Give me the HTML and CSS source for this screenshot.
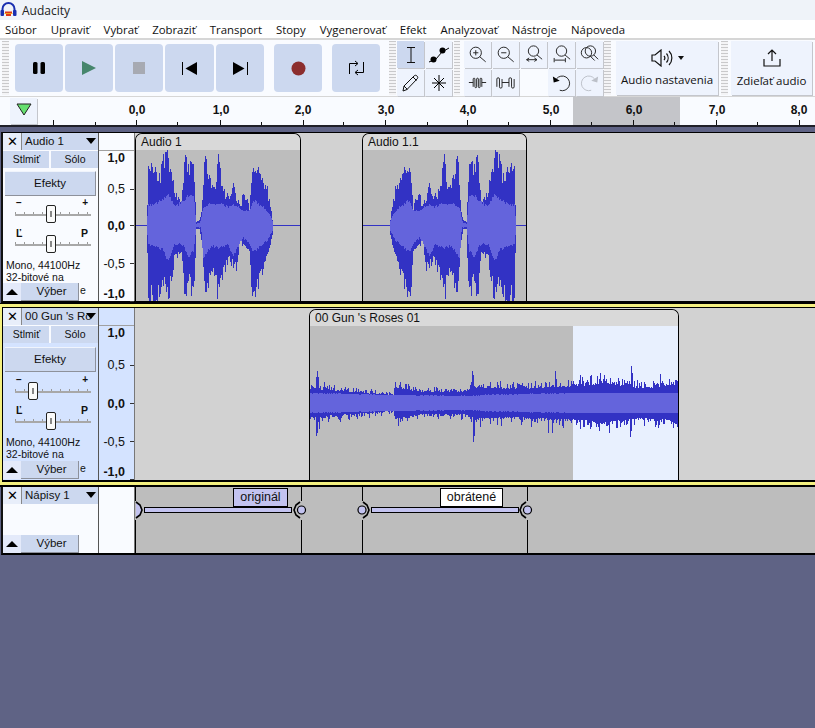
FILE: index.html
```html
<!DOCTYPE html>
<html lang="sk">
<head>
<meta charset="utf-8">
<title>Audacity</title>
<link rel="stylesheet" href="styles.css">
</head>
<body>
<header class="titlebar">
  <svg class="app-icon" width="17" height="16" viewBox="0 0 17 16"><path d="M2.500 10V7a6 6 0 0 1 12 0v3" fill="none" stroke="#1a2fb0" stroke-width="2"/><rect x="0.500" y="8" width="3.500" height="6" rx="1" fill="#1a2fb0"/><rect x="13" y="8" width="3.500" height="6" rx="1" fill="#1a2fb0"/><path d="M4.500 11h8v1h-8z" fill="#f0a020"/><path d="M5 9.500h7V11H5zM6 12h5v2H6z" fill="#e03818"/></svg>
  <span>Audacity</span>
</header>
<nav class="menubar">
  <span>Súbor</span><span>Upraviť</span><span>Vybrať</span><span>Zobraziť</span><span>Transport</span><span>Stopy</span><span>Vygenerovať</span><span>Efekt</span><span>Analyzovať</span><span>Nástroje</span><span>Nápoveda</span>
</nav>
<section class="toolbar">
  <div class="grip"></div>
  <div class="transport">
    <button class="tbtn"><svg width="14" height="14" viewBox="0 0 14 14"><rect x="1" y="1" width="4.500" height="12" rx="1.500"/><rect x="8.500" y="1" width="4.500" height="12" rx="1.500"/></svg></button>
    <button class="tbtn"><svg width="16" height="16" viewBox="0 0 16 16"><path d="M1 1l14 7-14 7z" fill="#46866c"/></svg></button>
    <button class="tbtn"><svg width="12" height="12" viewBox="0 0 12 12"><rect width="12" height="12" fill="#a7aab2"/></svg></button>
    <button class="tbtn wide"><svg width="15" height="13" viewBox="0 0 15 13"><path d="M.5 0v13" stroke="#000" fill="none"/><path d="M15 0v13L3.500 6.500z"/></svg></button>
    <button class="tbtn"><svg width="15" height="13" viewBox="0 0 15 13"><path d="M14.500 0v13" stroke="#000" fill="none"/><path d="M0 0v13l11.500-6.500z"/></svg></button>
    <button class="tbtn gap-left"><svg width="15" height="15" viewBox="0 0 15 15"><circle cx="7.500" cy="7.500" r="7" fill="#8c2e2e"/></svg></button>
    <button class="tbtn gap-left"><svg width="15" height="16" viewBox="0 0 15 16" fill="none" stroke="#000"><path d="M.5 14V3.500H8.500M6 1l3 2.500L6 6M14.500 2v10.500H6.500M9 10l-3 2.500L9 15"/></svg></button>
  </div>
  <div class="grip grip-b"></div>
  <div class="tools">
    <button class="sbtn active"><svg width="12" height="16" viewBox="0 0 12 16" fill="none" stroke="#111"><path d="M2 .5h8M2 15.500h8M6 .5v15"/></svg></button>
    <button class="sbtn"><svg width="22" height="18" viewBox="0 0 22 18"><path d="M1 16L8 13 14 6 21 2" stroke="#000" fill="none"/><circle cx="5.500" cy="13.500" r="3"/><circle cx="14.500" cy="4.500" r="3"/></svg></button>
    <button class="sbtn"><svg width="17" height="18" viewBox="0 0 17 18" fill="none" stroke="#111"><path d="M1 17l1-5L12 2c1-1 2-1 3 0s1 2 0 3L5 15.500zM2 12l3.500 3.500M11 3l3.500 3.500"/></svg></button>
    <button class="sbtn"><svg width="16" height="16" viewBox="0 0 16 16" fill="none" stroke="#000"><path d="M8 0v16M1 8h14M3 3l10 10M13 3L3 13"/></svg></button>
  </div>
  <div class="grip grip-c"></div>
  <div class="zoomtools">
    <button class="sbtn"><svg class="ico" viewBox="0 0 22 22"><circle cx="9" cy="9" r="6.500"/><path d="M13.500 13.500l7 6M9 6v6M6 9h6"/></svg></button>
    <button class="sbtn"><svg class="ico" viewBox="0 0 22 22"><circle cx="9" cy="9" r="6.500"/><path d="M13.500 13.500l7 6M6 9h6"/></svg></button>
    <button class="sbtn"><svg class="ico" viewBox="0 0 22 22"><circle cx="11" cy="7" r="6"/><path d="M15 11.500l6 5M3 17h12M6 15l-3 2 3 2M12 15l3 2-3 2"/></svg></button>
    <button class="sbtn"><svg class="ico" viewBox="0 0 22 22"><circle cx="11" cy="7" r="6"/><path d="M15 11.500l6 5M2.500 15v5M15.500 15v5M3 17.500h12"/></svg></button>
    <button class="sbtn"><svg class="ico" viewBox="0 0 22 22"><circle cx="7.500" cy="9" r="6"/><circle cx="12" cy="7" r="6"/><path d="M16 11.500l5 5M12 13l5 5"/></svg></button>
    <button class="sbtn"><svg class="ico" viewBox="0 0 22 22"><path d="M1 11h5M16 11h5M6 16V7a1 1 0 0 1 2 0v9a1 1 0 0 0 2 0V7a1 1 0 0 1 2 0v9a1 1 0 0 0 2 0V7a1 1 0 0 1 2 0v9"/></svg></button>
    <button class="sbtn"><svg class="ico" viewBox="0 0 22 22"><path d="M1 16V7a1.500 1.500 0 0 1 3 0v9a1.500 1.500 0 0 0 3 0V7M7 11h8M15 16V7a1.500 1.500 0 0 1 3 0v9a1.500 1.500 0 0 0 3 0V7"/></svg></button>
    <span class="sblank"></span>
    <button class="sbtn"><svg class="ico" viewBox="0 0 22 22" stroke-width="1.500"><path d="M5 7a8.500 8.500 0 1 1 4 13"/><path d="M1 4l1 7 7-2z" fill="#000" stroke="none"/></svg></button>
    <button class="sbtn"><svg class="ico faded" viewBox="0 0 22 22" stroke-width="1.500"><path d="M17 7a8.500 8.500 0 1 0-4 13"/><path d="M21 4l-1 7-7-2z" fill="#bcc0c8" stroke="none"/></svg></button>
  </div>
  <div class="grip grip-d"></div>
  <button class="bigbtn audio">
    <span class="bigicon"><svg width="33" height="18" viewBox="0 0 33 18" fill="none" stroke="#111" stroke-width="1.200"><path d="M1 6h3l6-5v16l-6-5H1zM13 7a3 3 0 0 1 0 4M15.500 4.500a7 7 0 0 1 0 9M18 2a10 10 0 0 1 0 14"/><path d="M27 7h6l-3 4z" fill="#111" stroke="none"/></svg></span>
    <span>Audio nastavenia</span>
  </button>
  <div class="grip grip-e"></div>
  <button class="bigbtn share">
    <span class="bigicon"><svg width="18" height="18" viewBox="0 0 18 18" fill="none" stroke="#111" stroke-width="1.200"><path d="M9 12V1M5 5l4-4 4 4M1 10v7h16v-7"/></svg></span>
    <span class="share-label">Zdieľať audio</span>
  </button>
</section>
<section class="ruler">
  <div class="play-head"><svg width="16" height="13" viewBox="0 0 16 13"><path d="M1 1h14L8 12z" fill="#66e070" stroke="#222"/></svg></div>
  <div class="ruler-sel"></div>
  <svg class="ruler-ticks" width="815" height="28" viewBox="0 0 815 28"><path d="M53.500 23v5M136.500 23v5M220.500 23v5M303.500 23v5M385.500 23v5M467.500 23v5M550.500 23v5M633.500 23v5M716.500 23v5M799.500 23v5M95.500 25v3M177.500 25v3M261.500 25v3M343.500 25v3M427.500 25v3M508.500 25v3M591.500 25v3M674.500 25v3M757.500 25v3" stroke="#111" fill="none"/></svg>
  <span class="rl" style="left:137px">0,0</span><span class="rl" style="left:221px">1,0</span><span class="rl" style="left:303px">2,0</span><span class="rl" style="left:386px">3,0</span><span class="rl" style="left:468px">4,0</span><span class="rl" style="left:551px">5,0</span><span class="rl" style="left:634px">6,0</span><span class="rl" style="left:717px">7,0</span><span class="rl" style="left:799px">8,0</span>
</section>
<main class="tracks">
  <article class="track audio-track first">
    <div class="panel">
      <div class="ph"><span class="x">✕</span><span class="pname">Audio 1</span><span class="tri"></span></div>
      <div class="mutes"><span>Stlmiť</span><span>Sólo</span></div>
      <div class="fx">Efekty</div>
      <div class="slider"><span class="sl-l">−</span><span class="sl-r">+</span><span class="thumb t-mid"></span></div>
      <div class="slider pan"><span class="sl-l">Ľ</span><span class="sl-r">P</span><span class="thumb t-mid"></span></div>
      <div class="info">Mono, 44100Hz<br>32-bitové na</div>
      <div class="pfoot"><span class="up"></span><span class="sel">Výber</span><span class="cut">e</span></div>
    </div>
    <div class="vruler">
      <div class="vtop"></div>
      <div class="vscale"><b>1,0</b><span>0,5</span><b>0,0</b><span>-0,5</span><b>-1,0</b></div>
    </div>
    <div class="lane">
      <div class="clip c1"><div class="clip-h">Audio 1</div><svg class="wave" id="w1" width="164" height="151"></svg></div>
      <div class="clip c2"><div class="clip-h">Audio 1.1</div><svg class="wave" id="w2" width="163" height="151"></svg></div>
    </div>
  </article>
  <article class="track audio-track selected">
    <div class="panel">
      <div class="ph"><span class="x">✕</span><span class="pname">00 Gun 's Ro</span><span class="tri"></span></div>
      <div class="mutes"><span>Stlmiť</span><span>Sólo</span></div>
      <div class="fx">Efekty</div>
      <div class="slider"><span class="sl-l">−</span><span class="sl-r">+</span><span class="thumb t-low"></span></div>
      <div class="slider pan"><span class="sl-l">Ľ</span><span class="sl-r">P</span><span class="thumb t-mid"></span></div>
      <div class="info">Mono, 44100Hz<br>32-bitové na</div>
      <div class="pfoot"><span class="up"></span><span class="sel">Výber</span><span class="cut">e</span></div>
    </div>
    <div class="vruler">
      <div class="vtop"></div>
      <div class="vscale"><b>1,0</b><span>0,5</span><b>0,0</b><span>-0,5</span><b>-1,0</b></div>
    </div>
    <div class="lane">
      <div class="clip c3"><div class="clip-h">00 Gun 's Roses 01</div><div class="clip-sel"></div><svg class="wave" id="w3" width="368" height="154"></svg></div>
    </div>
  </article>
  <article class="track label-track">
    <div class="panel">
      <div class="ph"><span class="x">✕</span><span class="pname">Nápisy 1</span><span class="tri"></span></div>
      <div class="pfoot"><span class="up"></span><span class="sel">Výber</span></div>
    </div>
    <div class="vruler blank"></div>
    <div class="lane label-lane">
      <svg class="label-art" width="680" height="66" viewBox="0 0 680 66" fill="none" stroke="#000">
        <path d="M.5 0v14M.5 33v33M166.500 0v14M166.500 33v33M227.500 0v14M227.500 33v33M392.500 0v14M392.500 33v33"/>
        <g fill="#c3c3f0"><rect x="9.500" y="20.500" width="147" height="5"/><rect x="236.500" y="20.500" width="147" height="5"/></g>
        <g stroke-width="1.600"><path d="M1 15l4 3 2 5-2 5-4 3" fill="#c3c3f0"/><path d="M228 15l4 3 2 5-2 5-4 3"/><path d="M165 15l-4 3-2 5 2 5 4 3"/><path d="M391 15l-4 3-2 5 2 5 4 3"/></g>
        <g fill="#c3c3f0" stroke-width="1.200"><circle cx="166.500" cy="23" r="4"/><circle cx="227" cy="23" r="4"/><circle cx="392.500" cy="23" r="4"/></g>
      </svg>
      <span class="lab lab1">originál</span>
      <span class="lab lab2">obrátené</span>
    </div>
  </article>
</main>
<script src="waves.js"></script>
</body>
</html>
```
FILE: styles.css
```css
* { box-sizing: border-box; }
html, body { margin: 0; padding: 0; height: 100%; overflow: hidden; }
body { background: #5f6385; font-family: "Liberation Sans", Arial, sans-serif; font-size: 12px; color: #111; }
button { font: inherit; color: inherit; padding: 0; border: 0; }

.titlebar { height: 20px; background: #eff3f9; display: flex; align-items: center; gap: 5px; font-family: "Open Sans", sans-serif; font-size: 12px; color: #222; }
.app-icon { flex: none; }
.menubar { height: 18px; background: #fff; display: flex; align-items: center; gap: 14px; padding-left: 5px; font-family: "Open Sans", sans-serif; font-size: 11.400px; color: #111; }

.toolbar { height: 59px; background: #f9fbff; border-top: 2px solid #d6d6d6; border-bottom: 1px solid #d6d6d6; display: flex; align-items: flex-start; position: relative; }
.grip { flex: none; width: 7px; height: 54px; margin: 1px 0 0 2px; background: repeating-linear-gradient(to bottom, #c9c9cb 0 1px, #f4f4f6 1px 3px); }
.transport { display: flex; margin: 4px 0 0 6px; gap: 2px; width: 365px; }
.tbtn { width: 48px; height: 48px; background: #ccd8ef; border-radius: 4px; display: flex; align-items: center; justify-content: center; }
.tbtn.wide { width: 49px; }
.tbtn.gap-left { margin-left: 8px; }
.grip-b { margin-left: 9px; }
.tools { display: grid; grid-template-columns: 27px 27px; grid-auto-rows: 27px; gap: 1px; margin: 1px 0 0 1px; }
.sbtn { width: 27px; height: 27px; background: #eef3fd; box-shadow: 1px 1px 0 #c4c6cc; display: flex; align-items: center; justify-content: center; }
.sbtn.active { background: #ccd8ef; }
.grip-c { margin-left: 2px; width: 6px; }
.zoomtools { display: grid; grid-template-columns: repeat(5, 27px); grid-auto-rows: 27px; gap: 1px; margin: 1px 0 0 4px; }
.ico { width: 19px; height: 19px; fill: none; stroke: #222; stroke-width: 1.100; }
.ico.faded { stroke: #bcc0c8; }
.grip-d { margin-left: 1px; width: 7px; }
.bigbtn { flex: none; height: 54px; margin: 1px 0 0 5px; background: #eef3fd; box-shadow: 1px 1px 0 #c4c6cc; display: flex; flex-direction: column; align-items: center; font-family: "Open Sans", sans-serif; font-size: 11.500px; color: #111; }
.bigicon { height: 31px; display: flex; align-items: center; padding-top: 3px; }
.audio { width: 102px; }
.share { width: 81px; margin-left: 3px; }
.share-label { margin-top: 1px; }
.grip-e { margin-left: 3px; width: 7px; }

.ruler { height: 28px; background: #f9fbff; position: relative; }
.play-head { position: absolute; left: 10px; top: 1px; width: 27px; height: 26px; background: #eef3fd; box-shadow: 1px 1px 0 #c4c6cc; display: flex; align-items: center; justify-content: center; padding-bottom: 4px; }
.ruler-sel { position: absolute; left: 573px; width: 107px; top: 0; bottom: 0; background: #c4c5c9; }
.ruler-ticks { position: absolute; left: 0; top: 0; }
.rl { position: absolute; top: 6px; width: 30px; margin-left: -15px; text-align: center; font-weight: bold; font-size: 12px; }

.tracks { border-top: 2px solid #202028; padding-top: 5px; }
.track { display: flex; background: #000; border-bottom: 2px solid #000; margin-left: 1px; border-left: 2px solid #111; }
.first { height: 171px; border-top: 1px solid #000; }
.selected { height: 181px; margin: 1px 0 0; padding: 1px 0 2px 1px; border: 0; border-top: 3px solid #f4f080; border-bottom: 3px solid #f4f080; border-left: 2px solid #f4f080; box-shadow: 0 -1px 0 #000, 0 2px 0 #000; }
.selected .panel, .selected .vruler { background: #d4e3ff; }
.selected .pfoot { bottom: 1px; }
.selected .fx { margin-top: 4px; }
.selected .slider:not(.pan) { margin-top: 6px; }
.selected .vscale { background-position: 100% 39px, 100% 77px, 100% 115px, 100% 153px; }
.selected .vscale > :nth-child(2) { margin-top: 16px; }
.selected .vscale > :nth-child(3) { margin-top: 23px; }
.selected .vscale > :nth-child(4) { margin-top: 22px; }
.label-track { height: 68px; margin-top: 2px; }
.panel { flex: none; width: 96px; background: #f9fbff; display: flex; flex-direction: column; position: relative; border-right: 1px solid #555; font-size: 11.500px; }
.ph { height: 17px; display: flex; background: #ccd8ef; position: relative; }
.x { flex: none; width: 19px; background: #e8eefa; border-right: 1px solid #888; text-align: center; font-size: 13px; line-height: 17px; color: #000; }
.pname { flex: 1; padding-left: 3px; line-height: 16px; white-space: nowrap; }
.tri { position: absolute; right: 2px; top: 5px; width: 0; height: 0; border: 5.500px solid transparent; border-top: 6px solid #000; border-bottom: 0; }
.mutes { height: 18px; display: flex; background: #ccd8ef; border-top: 1px solid #f9fbff; }
.mutes span { text-align: center; line-height: 17px; font-size: 10.500px; }
.mutes span:first-child { width: 48px; border-right: 2px solid #f9fbff; padding-left: 1px; }
.mutes span:last-child { flex: 1; padding-left: 1px; }
.fx { margin: 3px 2px 0; height: 25px; background: #ccd8ef; border-right: 1px solid #8d919b; border-bottom: 1px solid #8d919b; border-top: 1px solid #f0f4fc; text-align: center; line-height: 22px; font-size: 11.500px; }
.slider { flex: none; height: 21px; margin: 5px 7px 0 12px; position: relative; background: linear-gradient(#a8a8a8, #a8a8a8) 0 13px / 100% 2px no-repeat, repeating-linear-gradient(to right, #9a9a9a 0 1px, transparent 1px 9px) 0 11px / 100% 2px no-repeat; font-size: 10px; }
.pan { margin-top: 9px; height: 20px; }
.sl-l { position: absolute; left: 1px; top: -4px; font-weight: bold; }
.sl-r { position: absolute; right: 3px; top: -4px; font-weight: bold; }
.pan .sl-l, .pan .sl-r { font-size: 10.500px; }
.thumb { position: absolute; top: 4px; width: 10px; height: 18px; background: #fafafa; border: 1px solid #222; border-radius: 2px; }
.thumb::after { content: ""; position: absolute; left: 3px; top: 5px; width: 2px; height: 6px; background: #888; }
.t-mid { left: 31px; }
.t-low { left: 13px; }
.info { margin: 8px 0 0 3px; font-size: 10.500px; line-height: 12px; white-space: nowrap; }
.pfoot { position: absolute; left: 0; bottom: 0; display: flex; height: 18px; width: 100%; }
.up { width: 18px; background: #e4eafa; position: relative; }
.up::after { content: ""; position: absolute; left: 3px; top: 6px; border: 6px solid transparent; border-bottom: 6px solid #000; border-top: 0; }
.sel { width: 58px; padding-left: 4px; background: #ccd8ef; text-align: center; line-height: 17px; border-right: 1px solid #8d919b; border-bottom: 1px solid #8d919b; }
.cut { padding-left: 1px; font-size: 10.500px; line-height: 14px; }

.vruler { flex: none; width: 36px; background: #f9fbff; border-right: 1px solid #777; display: flex; flex-direction: column; }
.vtop { flex: none; height: 18px; border-bottom: 1px solid #a0a0a0; }
.vscale { flex: 1; display: flex; flex-direction: column; align-items: flex-end; padding: 0 9px 0 0; background: linear-gradient(#333, #333) 100% 38px / 4px 1px no-repeat, linear-gradient(#333, #333) 100% 74px / 4px 1px no-repeat, linear-gradient(#333, #333) 100% 112px / 4px 1px no-repeat, linear-gradient(#333, #333) 100% 150px / 4px 1px no-repeat; }
.vscale b, .vscale span { font-size: 12.500px; line-height: 16px; }
.vscale > :nth-child(1) { margin-top: -1px; }
.vscale > :nth-child(2) { margin-top: 15px; }
.vscale > :nth-child(3) { margin-top: 21px; }
.vscale > :nth-child(4) { margin-top: 22px; }
.vscale > :nth-child(5) { margin-top: 14px; }

.lane { flex: 1; position: relative; background: #d2d2d2; }
.clip { position: absolute; top: 0; bottom: 0; border: 1px solid #000; border-bottom: 0; border-radius: 7px 7px 0 0; background: #bdbdbd; overflow: hidden; }
.c1 { left: 0; width: 166px; }
.c2 { left: 227px; width: 165px; }
.c3 { left: 174px; width: 370px; top: 1px; }
.clip-h { height: 16px; background: #d9d9d9; padding-left: 5px; line-height: 16px; font-size: 12px; }
.clip-sel { position: absolute; left: 263px; right: 0; top: 16px; bottom: 0; background: #e8f0fe; }
.wave { position: absolute; left: 0; top: 16px; }
.lane.label-lane { background: #bdbdbd; }
.label-art { position: absolute; left: 0; top: 0; overflow: hidden; }
.lab { position: absolute; top: 1px; height: 19px; border: 1px solid #000; text-align: center; line-height: 17px; font-size: 12.500px; }
.lab1 { left: 98px; width: 55px; background: #c3c3f0; }
.lab2 { left: 305px; width: 63px; background: #fff; }
```
FILE: waves.js
```js
(function () {
  var seed = 4242;
  function rnd() { seed = (seed * 16807) % 2147483647; return seed / 2147483647; }
  function interp(pts, x) {
    if (x <= pts[0][0]) return pts[0][1];
    for (var i = 1; i < pts.length; i++) {
      if (x <= pts[i][0]) {
        var a = pts[i - 1], b = pts[i];
        return a[1] + (b[1] - a[1]) * (x - a[0]) / (b[0] - a[0]);
      }
    }
    return pts[pts.length - 1][1];
  }
  function el(svg, d, color) {
    var p = document.createElementNS("http://www.w3.org/2000/svg", "path");
    p.setAttribute("d", d);
    p.setAttribute("stroke", color);
    p.setAttribute("fill", "none");
    p.setAttribute("shape-rendering", "crispEdges");
    svg.appendChild(p);
  }
  // Envelope read off the reversed clip: [zoomed x, zoomed top, zoomed bottom]
  var env = [[92, 265, 310], [108, 170, 385], [125, 150, 430], [135, 110, 470], [148, 105, 505], [155, 130, 480], [160, 235, 375], [165, 195, 350], [178, 190, 345], [190, 225, 340], [200, 200, 410], [210, 145, 415], [215, 180, 400], [225, 190, 400], [240, 180, 440], [250, 100, 470], [255, 60, 505], [262, 170, 450], [280, 130, 440], [295, 80, 515], [303, 230, 350], [310, 270, 295], [320, 275, 295], [328, 100, 510], [345, 100, 450], [355, 65, 510], [365, 220, 370], [385, 175, 390], [405, 60, 510], [415, 60, 440], [430, 140, 500], [445, 120, 510], [465, 105, 510], [468, 270, 300]];
  var core = [[92, 270, 300], [110, 240, 330], [135, 220, 350], [150, 210, 365], [160, 240, 340], [180, 245, 320], [195, 230, 345], [210, 225, 375], [225, 230, 340], [250, 220, 350], [275, 220, 345], [300, 230, 380], [305, 265, 300], [310, 282, 288], [320, 282, 288], [328, 200, 360], [345, 195, 380], [360, 215, 340], [385, 230, 340], [405, 190, 390], [420, 210, 355], [440, 220, 350], [465, 225, 340], [468, 270, 300]];
  function col(list, k) { return list.map(function (r) { return [r[0], r[k]]; }); }
  var eT = col(env, 1), eB = col(env, 2), cT = col(core, 1), cB = col(core, 2);
  var samples = [];
  for (var i = 0; i < 126; i++) {
    var v = 92 + i * 3;
    var t = (285 - interp(eT, v)) / 3, b0 = (interp(eB, v) - 285) / 3;
    var scaleT = t > 6 ? 0.78 + 0.3 * rnd() : 1, scaleB = b0 > 6 ? 0.78 + 0.3 * rnd() : 1;
    samples.push({
      t: t * scaleT,
      b: b0 * scaleB,
      ct: (285 - interp(cT, v)) / 3 + (rnd() - 0.5) * 3,
      cb: (interp(cB, v) - 285) / 3 + (rnd() - 0.5) * 3
    });
  }
  function drawClip(id, width, start, reversed) {
    var svg = document.getElementById(id);
    var dO = "", dI = "", line = "";
    for (var x = 0; x < width; x++) {
      var k = x - start;
      var px = x + 0.5;
      if (k < 0 || k >= samples.length) { line += "M" + px + " 75V76"; continue; }
      var s = samples[reversed ? k : samples.length - 1 - k];
      dO += "M" + px + " " + Math.round(75 - Math.max(s.t, 1)) + "V" + Math.round(76 + Math.max(s.b, 1));
      dI += "M" + px + " " + Math.round(75 - Math.max(s.ct, 1)) + "V" + Math.round(76 + Math.max(s.cb, 1));
    }
    el(svg, line, "#3232c4");
    el(svg, dO, "#3232c4");
    el(svg, dI, "#6464dc");
  }
  drawClip("w1", 164, 11, false);
  drawClip("w2", 163, 27, true);

  var base3 = [[0, 19], [20, 17], [50, 14], [83, 10], [85, 21], [110, 15], [155, 15], [165, 21], [200, 19], [260, 22], [295, 26], [330, 20], [368, 24]];
  var core3 = [[0, 10], [80, 8], [85, 8], [160, 7], [170, 8], [260, 10], [368, 10]];
  var up3 = { 6: 26, 7: 32, 8: 26, 162: 32, 163: 28, 245: 32, 246: 24, 270: 28, 281: 28, 290: 30, 321: 37, 322: 30, 350: 29 };
  var dn3 = { 6: 33, 7: 30, 9: 26, 163: 39, 164: 33, 238: 30, 242: 30, 270: 26, 320: 34, 321: 28 };
  var svg3 = document.getElementById("w3");
  var a = "", b = "";
  for (var x3 = 0; x3 < 368; x3++) {
    var base = interp(base3, x3);
    var u = up3[x3] || base * (0.72 + 0.5 * rnd() * rnd());
    var d = dn3[x3] || base * (0.72 + 0.5 * rnd() * rnd());
    var c = interp(core3, x3) + rnd() - 0.5;
    var p3 = x3 + 0.5;
    a += "M" + p3 + " " + Math.round(77 - u) + "V" + Math.round(77 + d);
    b += "M" + p3 + " " + Math.round(77 - c) + "V" + Math.round(77 + c);
  }
  el(svg3, a, "#3232c4");
  el(svg3, b, "#6464dc");
})();
```
